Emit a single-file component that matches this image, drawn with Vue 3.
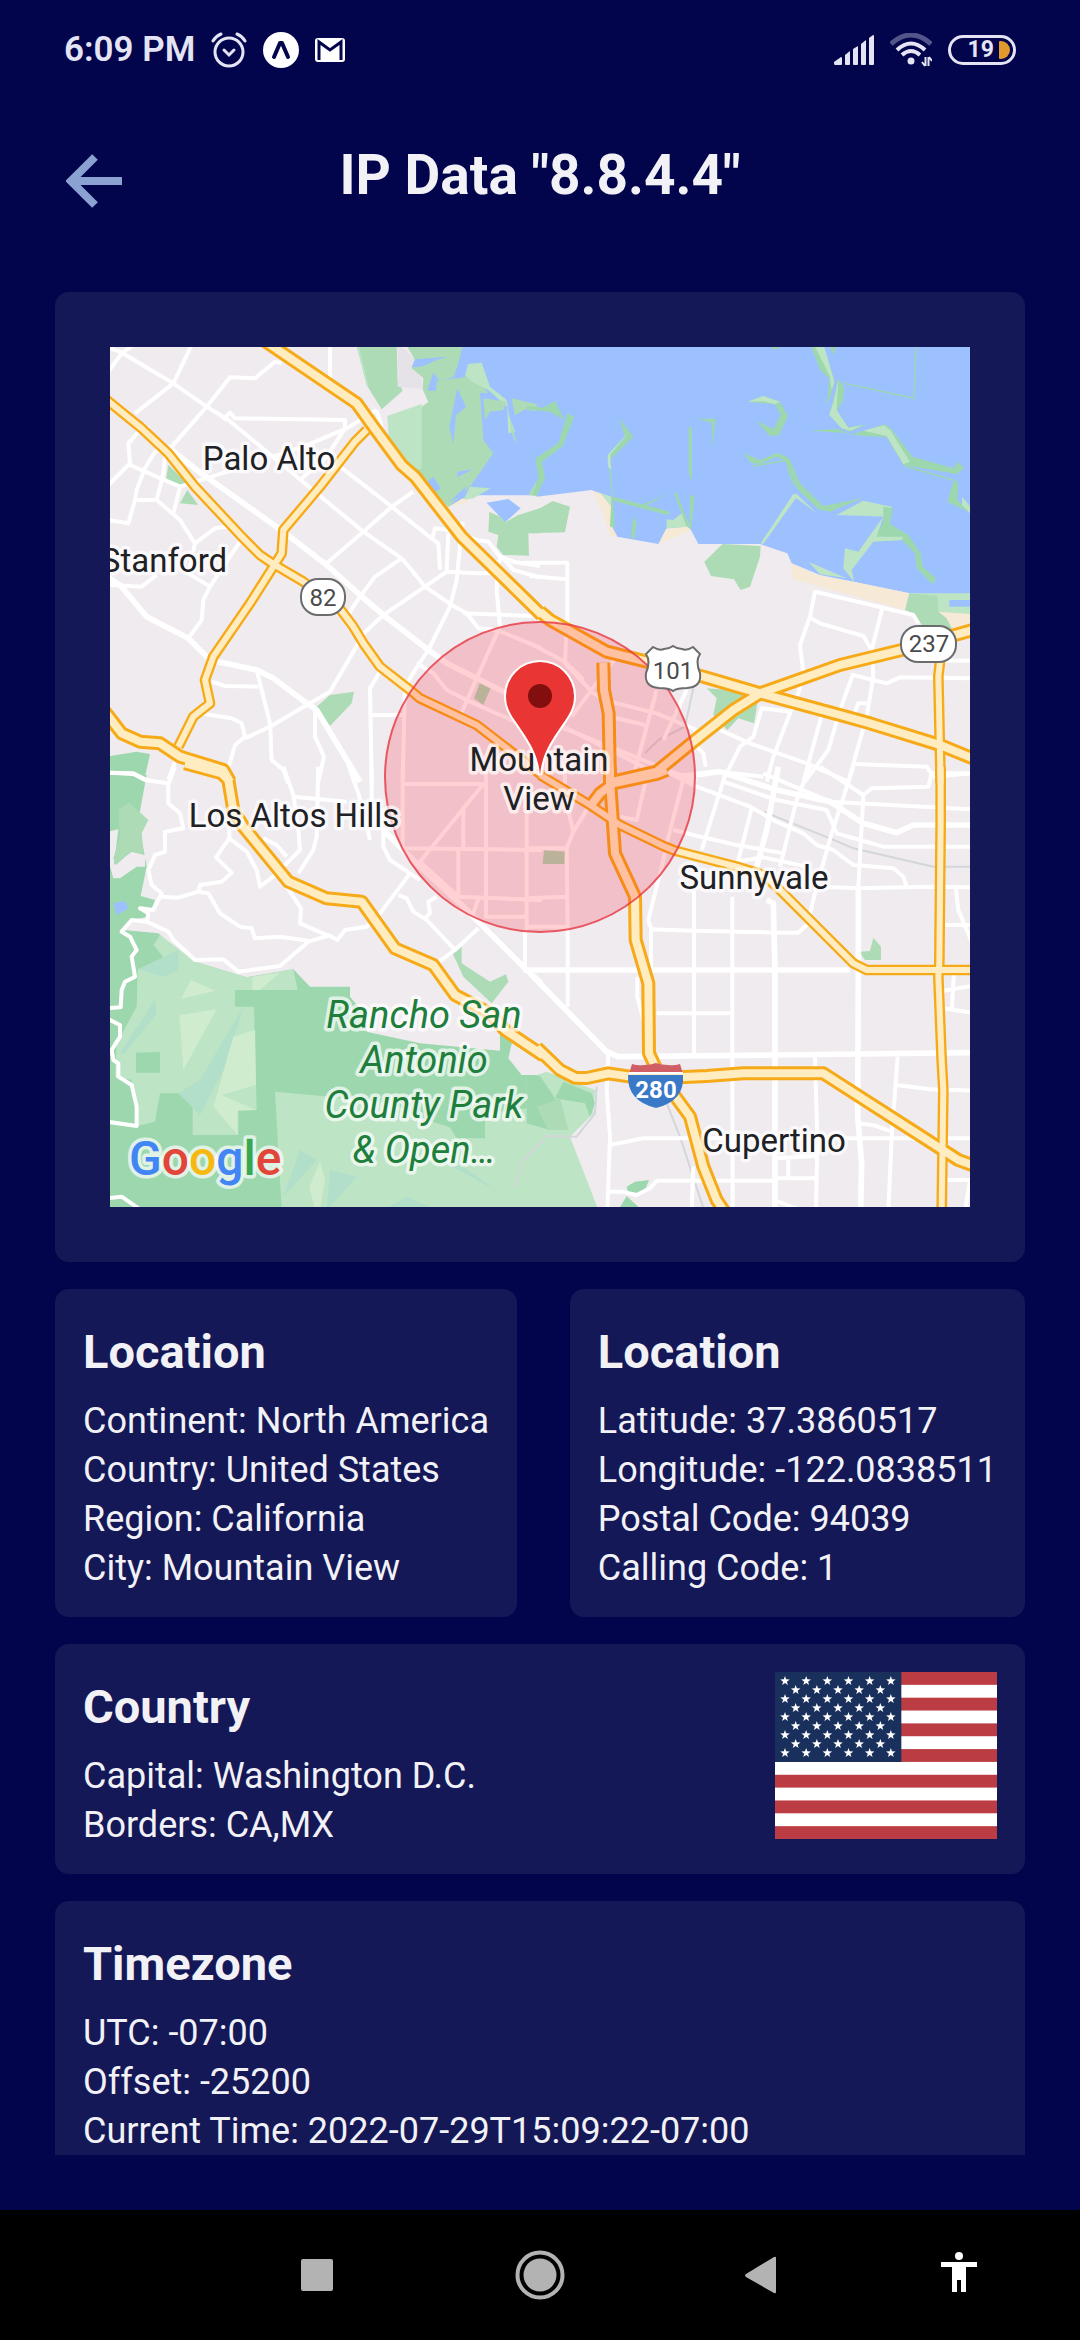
<script setup>
const locationCards = [
  {
    title: 'Location',
    rows: ['Continent: North America', 'Country: United States', 'Region: California', 'City: Mountain View'],
  },
  {
    title: 'Location',
    rows: ['Latitude: 37.3860517', 'Longitude: -122.0838511', 'Postal Code: 94039', 'Calling Code: 1'],
  },
]
const countryRows = ['Capital: Washington D.C.', 'Borders: CA,MX']
const timezoneRows = ['UTC: -07:00', 'Offset: -25200', 'Current Time: 2022-07-29T15:09:22-07:00']

// Flag: nine rows of stars, alternating six and five
const starPoints = Array.from({ length: 10 }, (_, i) => {
  const r = i % 2 ? 6 : 15
  const a = (Math.PI / 5) * i - Math.PI / 2
  return `${(r * Math.cos(a)).toFixed(1)},${(r * Math.sin(a)).toFixed(1)}`
}).join(' ')
const stars = []
for (let row = 0; row < 9; row++) {
  const odd = row % 2
  for (let col = 0; col < 6 - odd; col++) {
    stars.push({ x: 30 + odd * 32 + col * 63.5, y: 27 + row * 27 })
  }
}

// The map is kept as four quadrant tiles; every layer is drawn tile by tile.
const GREEN = '#addbb6'
const DEEP = '#9dd7ae'
const LIGHT = '#bce4c5'
const PALE = '#d0ecce'
const TEAL = '#b2dfca'
const WATER = '#9dc1ff'
const SAND = '#f6ead6'
const LAND = '#efebef'

const tiles = [
  {
    id: 'nw',
    at: 'translate(-10 -7) scale(.33333)',
    areas: [
      [WATER, 'M1085 10H1325V466H1110L1045 500L985 420L1050 100Z'],
      [GREEN, 'M768 10H890L893 120L908 152L845 208L800 135Z'],
      [LIGHT, 'M768 10L800 135L806 140L775 10Z'],
      ['#e6e3e8', 'M893 10L918 30L945 60L935 85L965 115L968 148L893 140Z'],
      [GREEN, 'M916 10H1090L1065 110L1100 108L1150 140L1165 160L1140 158L1150 300L1180 340L1110 440L1045 502L980 430L940 385L965 200L985 186L968 148L970 115L935 85L945 60Z'],
      [LIGHT, 'M862 228L965 192V388L940 385L905 370L868 310Z'],
      [WATER, 'M945 58L1042 50L1005 62L965 80L935 82Z'],
      [WATER, 'M1000 98L1018 122L1060 112L1070 85L1095 60V112L1010 122L1008 152L982 152Z'],
      [WATER, 'M1072 145L1098 200L1068 225L1060 312L1048 260Z'],
      [WATER, 'M980 425L1000 412L1022 445L1000 460Z M1072 395L1120 388L1072 412Z M1100 438L1090 465L1045 488Z'],
      [LIGHT, 'M1095 105L1105 72L1145 68L1170 140L1220 180L1228 230L1245 275L1225 280L1222 200L1165 150L1115 125Z'],
      [GREEN, 'M1150 175L1220 185L1210 210L1170 215L1155 240Z M1235 175L1320 195V215L1275 208L1245 225Z M1228 225L1252 320L1235 280Z'],
      [GREEN, 'M1325 345L1308 355L1312 420L1285 466H1325Z'],
      [LIGHT, 'M1110 440L1172 445L1120 475L1090 480Z'],
      [SAND, 'M1045 502L1088 475L1108 485Z'],
      [WATER, 'M1160 488L1225 477L1262 505L1215 547Z'],
      [GREEN, 'M1168 515L1200 530L1215 547L1255 525L1320 505V580H1285L1287 647L1210 645L1190 620L1195 585L1165 575Z'],
      [GREEN, 'M205 375L262 430L240 440L198 420Z M262 450L295 495L240 490Z M650 1100L690 1065L762 1055L755 1090L690 1158Z'],
      [DEEP, 'M20 1250L110 1235L150 1242L135 1310L70 1295L20 1300Z'],
      [GREEN, 'M1140 1028L1172 1045L1150 1095L1122 1075Z'],
    ],
    rail: ['M95 225L130 250'],
    streets: [
      'M30 25L60 35L220 130L320 200L385 240L440 285L530 360L650 460L790 575L905 655L935 690L975 740L1055 795L1100 820L1135 865L1190 870L1325 925',
      'M275 15L220 130L105 220', 'M25 95L65 40L100 15',
      'M545 70L525 65L465 115L390 112L320 200L215 320L165 335L135 385L110 450L105 480L85 550L25 540',
      'M690 15V115', 'M385 240L372 235L390 218L405 235L735 240V262', 'M830 210L740 265L610 320L520 350',
      'M830 212L845 260', 'M720 380L875 500L995 595L1015 610L1020 690', 'M940 455L875 500L790 575L680 670',
      'M600 420L680 350L735 265', 'M1130 600L1045 570L1005 565L995 600', 'M1045 580L1040 690',
      'M1088 545L1080 620L1070 720L1050 800L985 930L945 990L915 1040L908 1320',
      'M1190 680L1170 700L1130 700L1040 695L975 740L850 825L780 890', 'M905 655L825 710L780 770L740 830',
      'M1195 660L1190 750L1200 860L1150 970L1075 1140', 'M1090 820L1300 828',
      'M1130 600L1165 605L1200 650L1240 665L1320 678', 'M1190 680L1205 650L1240 690L1320 712',
      'M25 435L90 370L85 310L120 270L150 265', 'M90 375L170 410L240 440L220 520', 'M165 480H110',
      'M195 350L190 400L170 480L240 540L285 610', 'M240 440L430 380', 'M380 560L345 565L285 610L265 700L330 740L310 780L305 840L265 895',
      'M420 605L330 740', 'M25 735L125 740L170 705', 'M335 1025L375 1038L475 1040',
      'M470 990L510 1150L515 1260L550 1290L565 1330', 'M300 1120L395 1135L425 1150L435 1190L405 1215L375 1320',
      'M435 1195L510 1160L620 1095L690 1055L775 910', 'M645 1110V1190L672 1250L655 1325',
      'M840 995L810 1045L815 1330', 'M812 1125H910', 'M240 1225L205 1320', 'M20 1298L100 1300L140 1320',
      'M950 970L1000 1000L1040 1050L1110 1085L1325 1180',
    ],
    avenues: [
      'M210 325L290 390L550 575L680 675L780 765L850 825L985 930L1040 970L1200 1050L1325 1105',
      'M25 712L60 735L140 830L265 895L330 960L470 990L520 1015L600 1075L650 1110L780 1325',
    ],
    minor: [
      'M10 172L125 265L205 340L285 440L430 595L480 645L520 672L610 725L670 770L715 800L760 860L790 910L840 980L930 1050L960 1075L1130 1155L1325 1305',
      'M800 270L765 305L660 440L550 570L545 640L520 680L450 790L340 950L315 1020L330 1090L280 1130L235 1220',
    ],
    major: [
      'M490 0L770 190L820 260L905 375L945 410L1085 590L1325 825',
      'M15 1115L65 1180L120 1205L180 1210L240 1250L370 1290L390 1325',
    ],
  },
  {
    id: 'ne',
    at: 'translate(420 -7) scale(.33333)',
    areas: [
      [WATER, 'M20 10H1330V770L1138 760L970 725L870 705L785 670L772 640L690 612H505L480 565H410L385 612L262 590L243 558L200 458L185 450L20 470Z'],
      [SAND, 'M188 452L212 460L245 500V558L262 590L240 588L215 510Z M408 568L472 558L480 572L388 612Z M780 670L870 708L970 725L1138 760L1125 810L790 718Z M1150 815L1125 810L1160 850Z M1205 825L1225 795L1320 822V870H1250Z'],
      [LIGHT, 'M1138 760H1325V822L1222 815Z'],
      [WATER, 'M1258 780H1325V800H1258Z'],
      [GREEN, 'M1138 760L1222 768L1225 815L1250 835L1268 870L1180 860L1150 820L1125 810Z'],
      [GREEN, 'M68 483L120 500L105 577L0 580L-5 525Z M578 612L692 618L690 650L660 740L632 750L612 718L543 708L523 665Z'],
      [GREEN, 'M530 1045L600 1050L685 1075L672 1150L625 1135L592 1170L550 1125L560 1075Z'],
      [LIGHT, 'M210 458L245 470V500Z M410 538L430 540L460 515L480 560L410 565Z M920 525L1000 482L1085 500L1075 530Z'],
      [DEEP, 'M-10 197L40 203L75 183L103 240L60 215L-10 207Z M113 220L132 230L98 318L36 365L45 415L20 468L8 466L25 415L17 355L85 310Z'],
      [DEEP, 'M268 235L310 290L240 360L255 560H240L245 460L232 350L285 290Z'],
      [LIGHT, 'M298 275L240 345L244 390L234 380L233 345L285 288Z'],
      [DEEP, 'M476 262L486 262V425L476 400Z M503 236H556L550 325L545 248Z M480 468L494 465L484 570L478 565Z M430 455L442 462L478 560H470Z M310 528L320 550L312 598L303 590Z'],
      [DEEP, 'M250 470L420 515L415 526L250 482Z M340 493L418 460L345 498Z'],
      [DEEP, 'M652 185L700 168L750 185L774 228L748 285L720 288L678 241L730 268L752 225L735 193Z'],
      [LIGHT, 'M652 185L700 168L750 185L735 193L700 184Z'],
      [DEEP, 'M640 340L690 360L742 338L778 355L810 430L880 498L1000 474L900 515L865 508L800 445L765 362L740 350L690 372L665 370Z'],
      [LIGHT, 'M800 462L858 518L798 474L700 612L692 610L790 462Z'],
      [DEEP, 'M1060 500L1088 505L1080 552L1135 585L1172 640L1178 680L1218 715L1208 733L1160 685L1155 640L1115 600L1030 605L1060 545Z'],
      [LIGHT, 'M1060 530L1040 590L1120 590L1115 600L1030 605L965 690L972 725L940 685L945 625L985 635Z M835 665L950 715L870 703Z'],
      [DEEP, 'M840 10H878L915 125L890 200L898 115L870 90Z M925 118L943 140L940 180L920 215L955 262L1010 253L960 275L935 265L898 225Z'],
      [LIGHT, 'M850 10H880L913 125L905 150L900 110Z M925 118L920 210L955 264L1000 255L960 272L935 265L898 225L912 180Z'],
      [DEEP, 'M835 272L920 267L960 280Z M960 285L1065 253L1085 268L1148 350L1270 385L1285 365L1302 385L1280 402L1120 375L1070 292Z'],
      [LIGHT, 'M1000 272L1062 256L1082 272L1140 365L1120 372L1070 288Z'],
      [DEEP, 'M1270 425L1285 430L1282 480L1325 520L1252 485Z M898 10H925L908 45Z M730 15H775L725 30Z'],
      [LIGHT, 'M1296 470L1325 505V525L1296 495Z'],
    ],
    thin: ['M1158 15L1152 175L945 130', 'M1125 378L1283 424', 'M772 380L790 435', 'M670 378L765 362'],
    rail: ['M490 1045L465 1160L385 1200L345 1240'],
    streets: [
      'M1165 850L1150 825L855 755L840 830L810 915L820 1000L805 1060L780 1120L730 1250L710 1325',
      'M835 830L870 850L1000 888L1025 930', 'M1058 800L1025 930L1030 1010L1010 1130L955 1325',
      'M970 1000L930 1110L895 1230L825 1325', 'M970 1005L1070 1030L1110 1012L1330 1015', 'M1240 962H1330',
      'M1010 1090H985L970 1130L1020 1150', 'M785 1115L695 1105L670 1190L630 1220L580 1320',
      'M570 1170L660 1210L830 1270L955 1325', 'M490 1210L520 1240L527 1280', 'M480 1310L570 1295L700 1310',
      'M970 1272L1190 1280L1210 1310L1325 1300', 'M885 1090L820 1325', 'M-20 668H112V860', 'M0 708L110 718',
      'M110 850L105 970L190 1060L240 1085L380 1120L500 1170', 'M0 910L105 965L160 1020',
      'M380 1050L315 1290', 'M240 1130L345 1155', 'M260 950L125 1130', 'M470 1050L400 1200', 'M0 1110L400 1310', 'M90 1160L500 1325',
    ],
    avenues: [],
    minor: ['M1230 965L1225 1010L1232 1330'],
    major: [
      'M30 815L60 840L230 935L350 965L520 1010L690 1060L930 1125L1020 1150L1230 1215L1335 1258',
      'M220 968L222 1050L236 1120L240 1330',
      'M1335 868L1115 930L930 975L690 1060L610 1110L490 1205L380 1295L250 1325',
    ],
  },
  {
    id: 'sw',
    at: 'translate(-10 423) scale(.33333)',
    areas: [
      [DEEP, 'M20 15L140 15L115 150L140 290L122 378L165 390L145 440L90 450L70 480L175 490L210 520L285 575L440 622L580 598L630 650H750V680L800 740L800 785L960 820L1200 842V790L1240 800L1225 865L1265 915H1325V1320H20Z'],
      [LAND, 'M25 185L55 178L42 285L95 245L135 255V290H110L60 325H40L25 270Z'],
      [GREEN, 'M55 120L88 98L145 150L125 190L130 250L92 245L48 285L40 265L60 200Z'],
      [WATER, 'M40 400L75 393L85 415L50 435Z'],
      [LIGHT, 'M113 598L205 580L160 525L180 495L285 575L440 622L580 598L593 660H405V710H462L470 1020H415V1095H278V970H180L165 1055L112 1068L95 930L45 920L50 820L110 710Z'],
      [DEEP, 'M108 848L180 845V908H108Z'],
      [TEAL, 'M165 690L60 850L75 850L170 730Z M430 712L300 930L235 970L300 1035L370 900Z M113 598L235 540V600L190 620Z'],
      [PALE, 'M272 630L348 662L243 686Z M238 735L350 718L250 900Z M400 800L465 780L468 945L365 975L468 1020L413 1022V1095L340 1010Z M457 620L540 608L480 660H457Z'],
      [LIGHT, 'M525 965L740 985L880 1000L950 1040L1155 1105V1030L1325 1010V1320H545Z'],
      [DEEP, 'M1010 1010L1155 1030V1105H1070Z'],
      [TEAL, 'M600 1140L650 1170L550 1280Z M690 1200L770 1220L680 1320Z M860 1315L920 1280L990 1310Z M1040 1180L1090 1190L1190 1262Z'],
      [PALE, 'M660 1175L675 1230L660 1320H645L628 1250Z'],
      [GREEN, 'M1058 550L1085 530V580L1170 635L1218 613L1225 635L1175 700L1090 620Z'],
    ],
    rail: ['M1320 1120L1265 1175L1245 1250'],
    streets: [
      'M20 8L100 12L135 30L205 40',
      'M225 -10L205 45V100L240 130L250 175L195 185V245L165 255L145 300L155 345L185 370L160 420L120 415L145 430L140 455L95 450L65 485L90 500L110 540L95 560L105 620L75 635L65 660L62 712L20 715',
      'M140 455L205 485L220 510L285 570L370 568L415 605L540 588L625 515L685 497L600 460L603 415L560 350',
      'M185 380L235 383L295 365L325 370L360 430L420 470L455 475L465 505L540 500L625 512',
      'M295 365L300 345L365 335L395 308L348 262L388 205V160', 'M388 205L440 245L470 300L480 350L520 320L600 240L595 180L580 75L550 -10',
      'M490 205L530 225L560 260', 'M580 80L740 95', 'M655 -10L650 200L640 240L595 310', 'M745 -15L775 70L810 210',
      'M815 -10V90L850 180V230L870 270L930 310L960 330', 'M930 310L840 430L800 470L735 480L712 510L685 495',
      'M895 375L920 385L940 425L980 450L1065 540L1010 580', 'M1010 380L985 395L990 430L975 445', 'M1135 475L1065 540',
      'M1275 480V600H1325', 'M20 745L60 765V800L35 840L40 870L55 880V920L95 945L110 1010V1068L20 1055', 'M20 1285L65 1280L130 1325',
      'M908 -10V235L1325 240', 'M908 42H1150L960 275L1075 380L1325 390', 'M1158 0V440H1280', 'M1280 90V480', 'M1090 110V235', 'M1075 235V380', 'M1135 385L1120 430',
    ],
    avenues: ['M850 180L960 290L1080 400L1280 600L1325 640'],
    minor: [],
    major: ['M255 -20L365 10L385 30L400 120L430 170L565 335L680 385L785 395L885 535L1000 585L1065 675L1170 730L1215 780L1330 857'],
  },
  {
    id: 'se',
    at: 'translate(420 423) scale(.33333)',
    areas: [
      [LIGHT, 'M20 915L50 905L195 960L190 1030L120 1100L205 1320H20Z'],
      [LIGHT, 'M-10 920H60V1320H-10Z'],
      [DEEP, 'M-10 915L30 918L75 985L60 1080L-10 1060Z M75 985L100 935L185 970L195 1000L180 1040L165 1000Z'],
      [GREEN, 'M20 1010L90 985L115 1080H55Z'],
      [DEEP, 'M290 1250L315 1235L357 1230L345 1260L320 1275L295 1268Z M290 1278L335 1320H265Z'],
      [GREEN, 'M988 545L1020 543L1030 503L1053 530V570H1005Z'],
      [GREEN, 'M42 240L105 245L103 282H38Z'],
    ],
    rail: ['M700 125L900 205L970 235L1210 290H1325', 'M410 1000L450 1100L522 1320', 'M200 950L195 1030L140 1100L50 1098L0 1150'],
    streets: [
      'M235 850L230 960L240 1100L232 1325', 'M113 480V710', 'M363 480V600', 'M322 620V680L350 790', 'M380 730H605',
      'M492 360V850', 'M607 380V850L608 1325', 'M855 860L862 1110L858 1325', 'M1103 860L1085 1100L1075 1325',
      'M1100 945L1200 958L1325 962', 'M980 1060L1030 1065L1085 1085', 'M480 1105H1325', 'M240 1125L340 1105H480',
      'M240 1265H275L320 1275L360 1255L380 1232H740', 'M490 1190L485 1325', 'M740 1225H860', 'M775 1170V1225M740 1165L860 1158',
      'M740 1293L810 1320', 'M1240 1230H1320L1305 1325', 'M1240 715L1325 728', 'M1272 610L1265 720M1240 662L1325 648',
      'M1240 465H1325', 'M1278 355L1285 420L1325 515', 'M870 350L985 355L1200 350L1325 352',
      'M360 478L490 482L740 488H805L830 465L840 430L860 350L905 190L970 -10', 'M405 250L355 450L365 480',
      'M430 180L510 200L620 225L760 250', 'M500 50L660 110L740 155L820 190L860 225L910 240L970 285L1090 295L1120 320L1130 350',
      'M580 35L740 90L890 120L920 190L1060 230H1325', 'M700 10L900 95L1325 118', 'M590 0L515 240',
      'M665 115L620 290', 'M840 -10L800 90L750 290', 'M870 -10L1000 75L1025 55L1195 50L1205 10H1325',
      'M620 275L700 262L830 290', 'M1000 75L985 350',
      'M105 -10V80L130 185', 'M-10 235H110L130 185L250 -10', 'M110 235L113 480', 'M-10 385L113 380', 'M-10 470H113', 'M270 140L320 150L350 20', 'M465 10L405 240',
      'M380 -10L500 50',
    ],
    avenues: [
      'M-20 600H960', 'M0 610L230 845L265 860L740 855L1330 848', 'M710 390L730 400L735 600V1325',
      'M985 350V600L983 1040L995 1180L992 1325', 'M450 20L570 5L740 60L900 95L1000 160L1100 188L1150 165H1325', 'M745 -10L710 180L680 290',
    ],
    minor: [
      'M30 15L180 105L270 165L400 228L435 242L620 290L700 315L740 350L830 440L970 580L1010 600H1335',
      'M1232 -10L1232 160L1228 580L1225 620L1235 870L1240 960L1235 1330',
    ],
    major: [
      'M20 833L90 900L135 923L170 924L235 910L300 920L380 925L530 918L640 910L880 910L1285 1170L1335 1188',
      'M240 -10V30L255 250L315 380L317 510L355 640L357 850L385 910L480 1040L520 1190L560 1290L590 1335',
      'M410 0L380 12L250 40L210 70L180 110',
    ],
  },
]

const placeNames = [
  { text: 'Palo Alto', x: 159, y: 123 },
  { text: 'Stanford', x: 54, y: 225 },
  { text: 'Los Altos Hills', x: 184, y: 480 },
  { text: 'Mountain', x: 429, y: 424 },
  { text: 'View', x: 429, y: 463 },
  { text: 'Sunnyvale', x: 644, y: 542 },
  { text: 'Cupertino', x: 664, y: 805 },
]
const parkName = [
  { text: 'Rancho San', y: 681 },
  { text: 'Antonio', y: 726 },
  { text: 'County Park', y: 771 },
  { text: '& Open…', y: 816 },
]
</script>

<template>
  <div class="screen">
    <div class="status">
      <div class="status-side">
        <span class="clock">6:09 PM</span>
        <svg class="alarm" viewBox="0 0 36 36" fill="none" stroke="#e4e4f4" stroke-width="3" stroke-linecap="round">
          <circle cx="18" cy="20" r="14" />
          <path d="M2 9Q5 4 10 2M34 9Q31 4 26 2" />
          <path d="M13 18L18 23L23 18" />
        </svg>
        <svg class="expo" viewBox="0 0 36 36">
          <circle cx="18" cy="18" r="18" fill="#fff" />
          <path d="M11 25L17 11H19L25 25" fill="none" stroke="#02054c" stroke-width="4" stroke-linecap="round" stroke-linejoin="round" />
        </svg>
        <svg class="mail" viewBox="0 0 30 24">
          <rect width="30" height="24" rx="3" fill="#fff" />
          <path d="M4 22V4L15 12L26 4V22" fill="none" stroke="#02054c" stroke-width="3" />
        </svg>
      </div>
      <div class="status-side">
        <svg class="signal" viewBox="0 0 40 30" fill="#e4e4f4">
          <path d="M0 27L7 22Q8 22 8 23V29Q8 30 7 30H1Q0 30 0 28Z" />
          <path d="M11 20L16 16V29Q16 30 15 30H12Q11 30 11 29Z" />
          <path d="M19 14L24 11V29Q24 30 23 30H20Q19 30 19 29Z" />
          <path d="M27 9L32 5V29Q32 30 31 30H28Q27 30 27 29Z" />
          <path d="M35 3L39 0Q40 0 40 1V29Q40 30 39 30H36Q35 30 35 29Z" />
        </svg>
        <svg class="wifi" viewBox="0 0 42 34" fill="none" stroke="#e4e4f4" stroke-width="4">
          <path d="M1 11Q21 -7 41 11" stroke="#53548a" stroke-width="5" />
          <path d="M7 17Q21 4 35 17" />
          <path d="M12 22Q21 14 30 22" />
          <circle cx="21" cy="28" r="3.5" fill="#e4e4f4" stroke="none" />
          <path d="M35.5 24V33M32 29L35 33M38.5 33V24M42 28L39 24" stroke-width="2" />
        </svg>
        <div class="battery"><span>19</span><i></i></div>
      </div>
    </div>

    <header class="bar">
      <button class="back" aria-label="Back">
        <svg viewBox="0 0 56 54" fill="none" stroke="#8ba1d1" stroke-width="8">
          <path d="M56 27H6M29 3L5 27L29 51" />
        </svg>
      </button>
      <h1>IP Data "8.8.4.4"</h1>
    </header>

    <main class="content">
      <section class="card map-card">
        <svg class="map" viewBox="0 0 860 860">
          <rect width="860" height="860" :fill="LAND" />
          <g v-for="t in tiles" :key="t.id" :transform="t.at">
            <path v-for="(a, i) in t.areas" :key="i" :fill="a[0]" :d="a[1]" />
            <path v-for="d in t.thin" :key="d" class="thin" :d="d" />
          </g>
          <g v-for="t in tiles" :key="t.id" :transform="t.at" class="lines">
            <path v-for="d in t.rail" :key="d" class="rail" :d="d" />
            <path v-for="d in t.streets" :key="d" class="street" :d="d" />
            <path v-for="d in t.avenues" :key="d" class="avenue" :d="d" />
          </g>
          <g v-for="t in tiles" :key="t.id" :transform="t.at" class="lines">
            <path v-for="d in t.minor" :key="d" class="minor-edge" :d="d" />
            <path v-for="d in t.major" :key="d" class="major-edge" :d="d" />
          </g>
          <g v-for="t in tiles" :key="t.id" :transform="t.at" class="lines">
            <path v-for="d in t.minor" :key="d" class="minor" :d="d" />
            <path v-for="d in t.major" :key="d" class="major" :d="d" />
          </g>

          <circle cx="430" cy="430" r="155" fill="#ff0014" fill-opacity=".18" stroke="#e8404a" stroke-opacity=".85" stroke-width="2" />

          <g class="shield">
            <rect x="191" y="232" width="44" height="36" rx="17" />
            <rect x="791" y="279" width="55" height="36" rx="17" />
            <path d="M543 300Q549 304 554 302Q559 302 563 299Q567 302 572 302Q577 304 583 300L590 307Q585 314 590 326Q592 340 577 341Q567 341 563 344Q559 341 549 341Q534 340 536 326Q541 314 536 307Z" />
            <text x="213" y="259">82</text>
            <text x="819" y="305">237</text>
            <text x="563" y="332">101</text>
          </g>
          <path d="M522 717Q528 719 534 718Q541 718 546 716Q551 718 558 718Q564 719 570 717L573 727H519Z" fill="#cf5f65" />
          <path d="M518 728H573Q575 754 546 761Q517 754 518 728Z" fill="#3a78c8" />
          <path d="M519 726H573" stroke="#fff" stroke-width="2" />
          <text class="interstate" x="546" y="751">280</text>

          <text v-for="p in placeNames" :key="p.text" class="place" :x="p.x" :y="p.y">{{ p.text }}</text>
          <text v-for="p in parkName" :key="p.text" class="park" x="314" :y="p.y">{{ p.text }}</text>

          <text class="logo" x="19" y="828"><tspan fill="#4285f4">G</tspan><tspan fill="#e2463a">o</tspan><tspan fill="#f7b90f">o</tspan><tspan fill="#4285f4">g</tspan><tspan fill="#34a853">l</tspan><tspan fill="#e2463a">e</tspan></text>

          <path d="M430 428C428 408 421 397 408 378C401 368 396 361 396 349A34 34 0 0 1 464 349C464 361 459 368 452 378C439 397 432 408 430 428Z" fill="#ea3535" stroke="#fff" stroke-width="4" paint-order="stroke" />
          <circle cx="430" cy="349" r="12" fill="#820e0e" />
        </svg>
      </section>

      <div class="pair">
        <section v-for="(c, i) in locationCards" :key="i" class="card">
          <h2>{{ c.title }}</h2>
          <p v-for="r in c.rows" :key="r">{{ r }}</p>
        </section>
      </div>

      <section class="card country">
        <div>
          <h2>Country</h2>
          <p v-for="r in countryRows" :key="r">{{ r }}</p>
        </div>
        <svg class="flag" viewBox="0 0 666 501" role="img" aria-label="Flag of the United States">
          <rect width="666" height="501" fill="#fff" />
          <rect v-for="n in 7" :key="n" width="666" height="38.5" :y="(n - 1) * 77.08" fill="#bb3d43" />
          <rect width="379" height="270" fill="#1a305c" />
          <polygon v-for="(s, i) in stars" :key="i" :points="starPoints" :transform="`translate(${s.x} ${s.y})`" fill="#fff" />
        </svg>
      </section>

      <section class="card">
        <h2>Timezone</h2>
        <p v-for="r in timezoneRows" :key="r">{{ r }}</p>
      </section>
    </main>

    <nav class="system">
      <button aria-label="Recent apps">
        <svg viewBox="0 0 50 50"><rect x="9" y="9" width="32" height="32" rx="2" fill="#b3b3b3" /></svg>
      </button>
      <button aria-label="Home">
        <svg viewBox="0 0 50 50">
          <circle cx="25" cy="25" r="22.5" fill="none" stroke="#b3b3b3" stroke-width="4" />
          <circle cx="25" cy="25" r="16.5" fill="#b3b3b3" />
        </svg>
      </button>
      <button aria-label="Back">
        <svg viewBox="0 0 50 50"><path d="M10 24L38 7Q40 6 40 8V42Q40 44 38 43L10 27Q8 25.5 10 24Z" fill="#b3b3b3" /></svg>
      </button>
      <button aria-label="Accessibility">
        <svg viewBox="0 0 50 50" fill="#fff">
          <circle cx="25" cy="6" r="4" />
          <path d="M7 12H43V17H32V42H27V30H23V42H18V17H7Z" />
        </svg>
      </button>
    </nav>
  </div>
</template>

<style>
body {
  background: #02054c;
}
</style>

<style scoped>
.screen {
  display: flex;
  flex-direction: column;
  height: 100vh;
  background: #02054c;
  color: #f1f1f6;
  font-family: Roboto, "Noto Sans", sans-serif;
}
button {
  padding: 0;
  border: 0;
  background: none;
}
svg {
  display: block;
}

.status {
  display: flex;
  justify-content: space-between;
  align-items: center;
  flex: none;
  box-sizing: border-box;
  height: 98px;
  padding: 2px 64px 0;
}
.status-side {
  display: flex;
  align-items: center;
  gap: 16px;
}
.clock {
  font-size: 35px;
  line-height: 40px;
  font-weight: 600;
  color: #e4e4f4;
}
.alarm,
.expo {
  width: 36px;
  height: 36px;
}
.mail {
  width: 30px;
  height: 24px;
}
.signal {
  width: 40px;
  height: 30px;
}
.wifi {
  width: 42px;
  height: 34px;
}
.battery {
  display: flex;
  align-items: center;
  justify-content: flex-end;
  gap: 5px;
  box-sizing: border-box;
  width: 68px;
  height: 30px;
  padding-right: 3px;
  border: 3px solid #e4e4f4;
  border-radius: 15px;
  font-size: 23px;
  line-height: 24px;
  font-weight: 700;
  color: #e4e4f4;
}
.battery i {
  width: 11px;
  height: 18px;
  border-radius: 1px 9px 9px 1px;
  background: #df9a2b;
}

.bar {
  display: grid;
  grid-template-columns: 1fr auto 1fr;
  align-items: end;
  flex: none;
  padding: 44px 66px 84px;
}
.back {
  justify-self: start;
}
.back svg {
  width: 56px;
  height: 54px;
}
h1 {
  margin: 0;
  font-size: 55px;
  line-height: 66px;
  font-weight: 700;
}

.content {
  display: flex;
  flex-direction: column;
  gap: 27px;
  flex: 1;
  min-height: 0;
  margin: 0 55px 55px;
  overflow: hidden;
}
.card {
  flex: none;
  padding: 28px 28px 24px;
  border-radius: 14px;
  background: #151857;
}
.map-card {
  padding: 55px;
}
.map {
  width: 100%;
  aspect-ratio: 1;
  overflow: hidden;
}
.pair,
.country {
  display: flex;
  flex: none;
  justify-content: space-between;
}
.flag {
  width: 222px;
  height: 167px;
}
h2 {
  margin: 0 0 10px;
  font-size: 47px;
  line-height: 70px;
  font-weight: 700;
}
p {
  margin: 0;
  font-size: 36px;
  line-height: 49px;
}

.lines path {
  fill: none;
  stroke-linejoin: round;
}
.thin {
  fill: none;
  stroke: #9dd7ae;
  stroke-width: 4px;
}
.lines .rail {
  stroke: #d3d7da;
  stroke-width: 6px;
}
.lines .street {
  stroke: #fff;
  stroke-width: 12px;
}
.lines .avenue {
  stroke: #fff;
  stroke-width: 17px;
}
.lines .minor-edge {
  stroke: #f6aa18;
  stroke-width: 32px;
}
.lines .minor {
  stroke: #ffecc0;
  stroke-width: 18px;
}
.lines .major-edge {
  stroke: #f6aa18;
  stroke-width: 42px;
}
.lines .major {
  stroke: #ffecc0;
  stroke-width: 24px;
}

.shield rect,
.shield path {
  fill: #fff;
  stroke: #6a6c6e;
  stroke-width: 2px;
}
.shield text {
  font-size: 24px;
  fill: #4a4a4c;
  text-anchor: middle;
}
.interstate {
  font-size: 24px;
  font-weight: 700;
  fill: #fff;
  text-anchor: middle;
}
.place,
.park,
.logo {
  paint-order: stroke;
  stroke: rgba(255, 255, 255, 0.7);
  stroke-width: 7px;
  stroke-linejoin: round;
}
.place {
  font-size: 33px;
  fill: #202124;
  text-anchor: middle;
}
.park {
  font-size: 38px;
  font-style: italic;
  fill: #1e7e3c;
  text-anchor: middle;
}
.logo {
  font-size: 48px;
  font-weight: 500;
}

.system {
  display: grid;
  grid-template-columns: 223fr 224fr 218fr 177fr;
  align-items: center;
  justify-items: center;
  flex: none;
  height: 130px;
  padding: 0 3% 0 19%;
  background: #000;
}
.system svg {
  width: 50px;
  height: 50px;
}
</style>
